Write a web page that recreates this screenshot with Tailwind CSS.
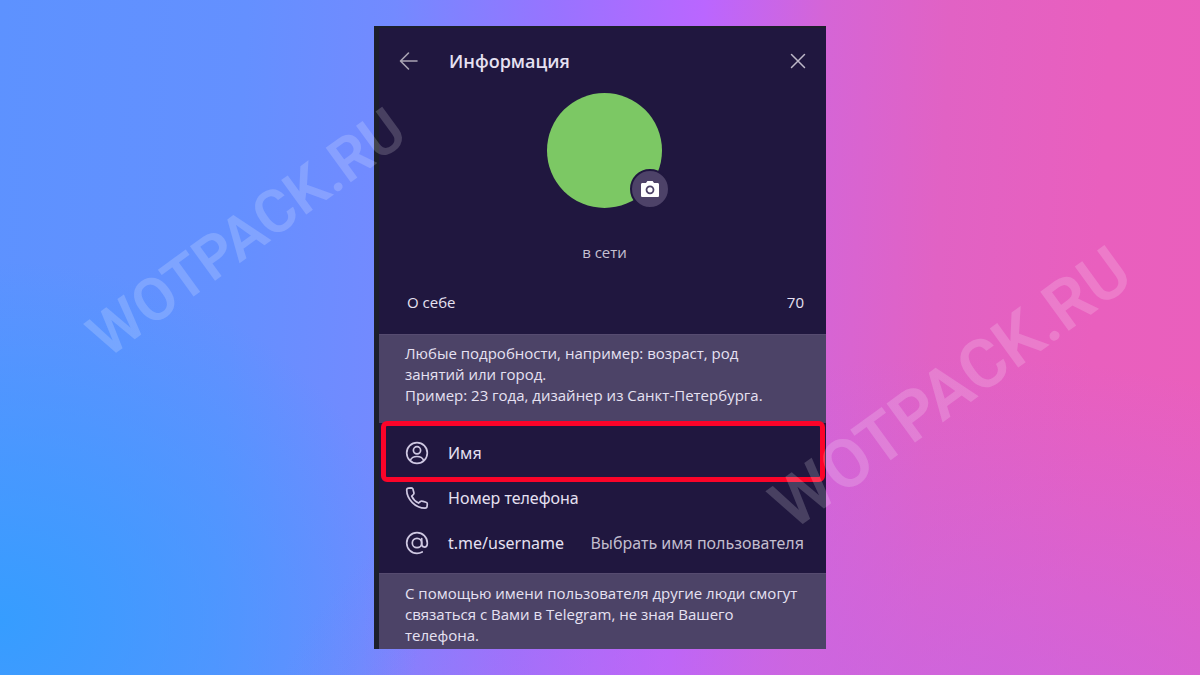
<!DOCTYPE html>
<html lang="ru">
<head>
<meta charset="utf-8">
<meta name="viewport" content="width=device-width, initial-scale=1">
<title>Информация</title>
<script src="https://cdn.jsdelivr.net/npm/@tailwindcss/browser@4"></script>
</head>
<body class="font-['Open_Sans','Noto_Sans',sans-serif]">
<div class="relative min-h-screen overflow-hidden bg-[radial-gradient(ellipse_420px_360px_at_0%_92%,#369dff_0%,#369dff00_100%),radial-gradient(ellipse_700px_420px_at_80%_115%,#c466eacc_0%,#c466ea00_100%),linear-gradient(93deg,#5d92ff_0%,#6490ff_20%,#738aff_32%,#9873ff_45%,#ba66ff_57%,#d565d6_67%,#e162c4_77%,#e95fbe_90%,#ea5fbc_100%)] pt-[26px] pb-[26px]">
  <main class="mx-auto w-full max-w-[452px] border-t-2 border-l-5 border-[#1c1f2b] bg-[#20173f] text-base text-[#e6e1f2]">
    <header class="flex h-[65px] items-center pr-5 pl-5">
      <button type="button" aria-label="Назад" class="w-5 text-[#a9a4b4]">
        <svg viewBox="0 0 20 20" class="size-5" fill="none" stroke="currentColor" stroke-width="1.6" stroke-linecap="round" stroke-linejoin="round"><path d="M18 10H2M9.500 2 1.500 10l8 8"/></svg>
      </button>
      <h1 class="ml-[30px] flex-1 text-lg font-semibold">Информация</h1>
      <button type="button" aria-label="Закрыть" class="text-[#bdb8c8]">
        <svg viewBox="0 0 16 16" class="size-4" fill="none" stroke="currentColor" stroke-width="1.5" stroke-linecap="round"><path d="m1.500 1.500 13 13m0-13-13 13"/></svg>
      </button>
    </header>

    <section class="flex flex-col items-center pl-1">
      <div class="relative size-[115px] rounded-full bg-[#7cc864]">
        <button type="button" aria-label="Изменить фото" class="absolute -right-2 -bottom-px flex size-10 items-center justify-center rounded-full border-2 border-[#20173f] bg-[#4d4268] text-white">
          <svg viewBox="0 0 20 18" class="h-[18px] w-5" fill="none"><path d="M6.500 2.200 7.400 1h5.200l.9 1.200.5.800h3.500c1 0 1.500.6 1.500 1.500v11c0 1-.5 1.500-1.500 1.500h-15C1.500 17 1 16.500 1 15.500v-11C1 3.600 1.500 3 2.500 3H6z" fill="currentColor"/><circle cx="10" cy="9.800" r="3.500" stroke="#4d4268" stroke-width="1.800"/></svg>
        </button>
      </div>
      <p class="mt-8 text-[15px] leading-6 text-[#c5c0d2]">в сети</p>
    </section>

    <div class="mt-[26px] flex h-6 items-center pr-[22px] pl-7">
      <input type="text" aria-label="О себе" placeholder="О себе" maxlength="70" class="min-w-0 flex-1 bg-transparent text-[15px] leading-6 outline-none placeholder:text-[#e6e1f2]">
      <span class="text-[15px]">70</span>
    </div>

    <p class="mt-5 h-[89px] border-t border-[#564b70] bg-[#4c4367] pt-2 pr-4 pl-[26px] text-[15px] leading-[21px]">Любые подробности, например: возраст, род<br>занятий или город.<br>Пример: 23 года, дизайнер из Санкт-Петербурга.</p>

    <ul class="relative pt-[7px] pb-2 font-['Noto_Sans','Open_Sans',sans-serif]">
      <li><button type="button" class="flex h-[45px] w-full items-center pr-5 pl-[26px] text-left">
        <svg viewBox="0 0 24 24" class="size-6 text-[#cfc8e2]" fill="none" stroke="currentColor" stroke-width="1.700" stroke-linecap="round"><circle cx="12" cy="12" r="10.300"/><circle cx="12" cy="9.300" r="3.600"/><path d="M5.300 19.300c1.200-2.600 3.600-3.800 6.700-3.800s5.500 1.200 6.700 3.800"/></svg>
        <span class="ml-[19px]">Имя</span>
      </button></li>
      <li><button type="button" class="flex h-[45px] w-full items-center pr-5 pl-[26px] text-left">
        <svg viewBox="0 0 24 24" class="size-6 text-[#cfc8e2]" fill="none" stroke="currentColor" stroke-width="1.700" stroke-linejoin="round"><path d="M3.600 2.100 6.300 1.900c.8 0 1.400.4 1.600 1.200l1 3.600c.2.700 0 1.300-.5 1.800L6.700 10.200c1.300 2.900 3.700 5.400 6.800 6.900l1.900-1.600c.5-.4 1.100-.6 1.700-.4l4 1.200c.8.200 1.300.9 1.200 1.700l-.2 2.300c-.1 1.100-1 1.900-2.100 1.900C10.500 22.200 1.800 13.400 1.700 4.100c0-1.100.8-1.900 1.900-2z"/></svg>
        <span class="ml-[19px]">Номер телефона</span>
      </button></li>
      <li><button type="button" class="flex h-[45px] w-full items-center pr-[22px] pl-[26px] text-left">
        <svg viewBox="0 0 24 24" class="size-6 text-[#cfc8e2]" fill="none" stroke="currentColor" stroke-width="1.700" stroke-linecap="round"><circle cx="12" cy="12" r="4.700"/><path d="M16.700 7.500v5.600c0 1.800 1.100 3 2.800 3s2.800-1.300 2.800-3.300V12A10.300 10.300 0 1 0 12 22.300c1.900 0 3.700-.5 5.200-1.300"/></svg>
        <span class="ml-[19px]">t.me/username</span>
        <span class="ml-auto whitespace-nowrap text-[#c2bdce]">Выбрать имя пользователя</span>
      </button></li>
      <li aria-hidden="true" class="pointer-events-none absolute -top-0.5 right-px left-0.5 h-[61px] rounded-md border-5 border-[#fb0429]"></li>
    </ul>

    <p class="border-t border-[#564b70] bg-[#4c4367] pt-[9px] pr-4 pb-[3px] pl-[26px] text-[15px] leading-[21px]">С помощью имени пользователя другие люди смогут<br>связаться с Вами в Telegram, не зная Вашего<br>телефона.</p>
  </main>

  <span aria-hidden="true" class="pointer-events-none absolute top-[233px] left-[247px] -translate-x-1/2 -translate-y-1/2 -rotate-36 font-['Roboto',sans-serif] text-[60px] leading-none font-semibold text-white/18">WOTPACK.RU</span>
  <span aria-hidden="true" class="pointer-events-none absolute top-[388px] left-[951px] -translate-x-1/2 -translate-y-1/2 -rotate-36 font-['Roboto',sans-serif] text-[68px] leading-none font-semibold text-white/18">WOTPACK.RU</span>
</div>
</body>
</html>
